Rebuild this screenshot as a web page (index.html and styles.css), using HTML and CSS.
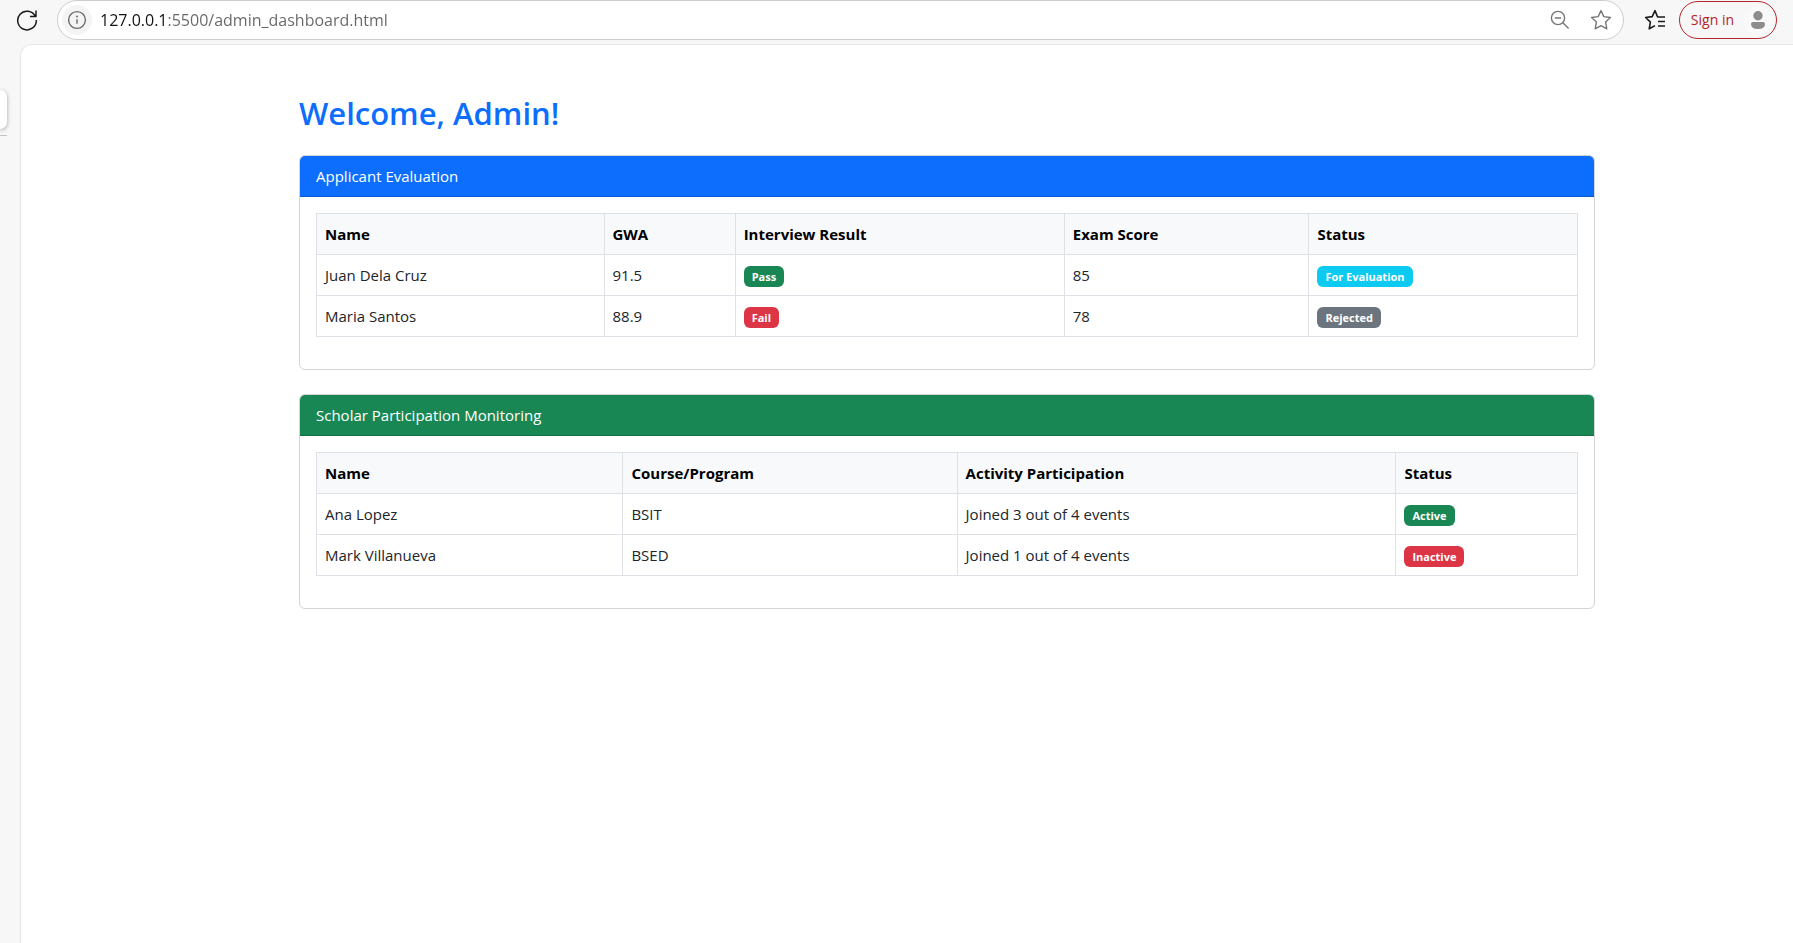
FILE: index.html
```html
<!DOCTYPE html>
<html lang="en">
<head>
<meta charset="utf-8">
<title>Admin Dashboard</title>
<link rel="stylesheet" href="styles.css">
</head>
<body>
<header class="toolbar">
  <button class="icon-button reload" aria-label="Reload">
    <svg width="22" height="22" viewBox="0 0 22 22"><path d="M19.4 7.5A9.3 9.3 0 1 0 20.3 11M20 1.5V7.5H14" /></svg>
  </button>
  <div class="address-bar">
    <button class="icon-button site-info" aria-label="View site information">
      <svg width="20" height="20" viewBox="0 0 20 20"><circle cx="10" cy="10" r="8.4"/><path d="M10 9.2V13.8"/><circle class="dot" cx="10" cy="6.6" r="1"/></svg>
    </button>
    <input class="address" type="text" aria-label="Address" spellcheck="false" value="127.0.0.1:5500/admin_dashboard.html">
    <button class="icon-button muted" aria-label="Zoom out">
      <svg width="20" height="20" viewBox="0 0 20 20"><circle cx="8" cy="8" r="6.6"/><path d="M4.8 8H11.2M12.8 12.8L18.6 18.4"/></svg>
    </button>
    <button class="icon-button muted" aria-label="Add to favorites">
      <svg width="22" height="22" viewBox="0 0 22 22"><path d="M11 1.6L13.8 7.6L20.4 8.5L15.6 13.1L16.8 19.8L11 16.6L5.2 19.8L6.4 13.1L1.6 8.5L8.2 7.6Z"/></svg>
    </button>
  </div>
  <button class="icon-button favorites" aria-label="Favorites">
    <svg width="22" height="22" viewBox="0 0 22 22"><path d="M11 16.6L5.2 19.8L6.4 13.1L1.6 8.5L8.2 7.6L11 1.6L13.6 8H21M14 12.5H21M14 17H21"/></svg>
  </button>
  <button class="sign-in">
    <span>Sign in</span>
    <span class="avatar"><svg width="16" height="20" viewBox="0 0 16 20"><circle cx="8" cy="5.8" r="4.7"/><path d="M3 12H13Q15 12 15 14Q15 19 8 19Q1 19 1 14Q1 12 3 12Z"/></svg></span>
  </button>
</header>
<div class="workspace">
  <aside class="side-strip"><div class="side-tab"></div><hr class="side-line"></aside>
  <main class="page">
    <div class="container">
      <h2 class="welcome">Welcome, Admin!</h2>

      <section class="card">
        <div class="card-header primary">Applicant Evaluation</div>
        <div class="card-body">
          <table class="table applicants">
            <thead><tr><th>Name</th><th>GWA</th><th>Interview Result</th><th>Exam Score</th><th>Status</th></tr></thead>
            <tbody>
              <tr><td>Juan Dela Cruz</td><td>91.5</td><td><span class="badge success">Pass</span></td><td>85</td><td><span class="badge info">For Evaluation</span></td></tr>
              <tr><td>Maria Santos</td><td>88.9</td><td><span class="badge danger">Fail</span></td><td>78</td><td><span class="badge secondary">Rejected</span></td></tr>
            </tbody>
          </table>
        </div>
      </section>

      <section class="card">
        <div class="card-header success">Scholar Participation Monitoring</div>
        <div class="card-body">
          <table class="table scholars">
            <thead><tr><th>Name</th><th>Course/Program</th><th>Activity Participation</th><th>Status</th></tr></thead>
            <tbody>
              <tr><td>Ana Lopez</td><td>BSIT</td><td>Joined 3 out of 4 events</td><td><span class="badge success">Active</span></td></tr>
              <tr><td>Mark Villanueva</td><td>BSED</td><td>Joined 1 out of 4 events</td><td><span class="badge danger">Inactive</span></td></tr>
            </tbody>
          </table>
        </div>
      </section>
    </div>
  </main>
</div>
</body>
</html>
```

FILE: styles.css
```css
*, *::before, *::after { box-sizing: border-box; }

body {
  margin: 0;
  min-height: 100vh;
  display: flex;
  flex-direction: column;
  background: #f7f7f7;
  color: #212529;
  font: 15px/24px "Open Sans", "Noto Sans", sans-serif;
}

button, input { font: inherit; color: inherit; background: none; border: 0; padding: 0; margin: 0; }

svg { display: block; fill: none; stroke: currentColor; stroke-width: 1.4; stroke-linejoin: round; }

/* Toolbar */
.toolbar { display: flex; align-items: center; height: 44px; padding: 0 16px 4px; }
.icon-button { display: flex; align-items: center; justify-content: center; flex: none; }
.reload { color: #1b1b1b; margin-right: 19px; }
.reload svg { stroke-width: 1.5; }
.address-bar {
  flex: 1;
  min-width: 0;
  height: 40px;
  display: flex;
  align-items: center;
  gap: 20px;
  padding: 0 11px 0 4px;
  border: 1px solid #cdcdcd;
  border-radius: 20px;
  background: #fff;
}
.site-info { width: 30px; height: 30px; border-radius: 50%; background: #f4f4f4; color: #6b6b6b; margin-right: -12px; }
.site-info .dot { fill: currentColor; stroke: none; }
.address {
  flex: 1;
  min-width: 0;
  height: 30px;
  font-size: 16px;
  background: linear-gradient(90deg, #111 68px, #666 68px);
  background-clip: text;
  -webkit-text-fill-color: transparent;
}
.muted { color: #777; }
.favorites { color: #1b1b1b; margin: 0 13px 0 20px; }
.favorites svg { stroke-width: 1.6; }
.sign-in {
  display: flex;
  align-items: center;
  gap: 10px;
  height: 38px;
  padding: 0 4px 0 11px;
  border: 1px solid #b3262b;
  border-radius: 19px;
  color: #b3262b;
  font-size: 14px;
}
.avatar { display: flex; align-items: center; justify-content: center; width: 28px; height: 28px; border-radius: 50%; background: #f9f9f9; color: #8c8c8c; }
.avatar svg { fill: currentColor; stroke: none; }

/* Page frame */
.workspace { flex: 1; display: flex; }
.side-strip { width: 20px; padding-top: 46px; flex: none; }
.side-tab { width: 7px; height: 39px; background: #fff; border-radius: 0 8px 8px 0; box-shadow: 0 1px 4px rgba(0, 0, 0, .35); }
.side-line { width: 7px; height: 1px; margin: 6px 0 0; border: 0; background: #c4c4c4; }
.page {
  flex: 1;
  min-width: 0;
  padding: 48px 0 48px 80px;
  background: #fff;
  border: solid #e6e6e6;
  border-width: 1px 0 0 1px;
  border-top-left-radius: 12px;
}
.container { max-width: 1320px; margin: 0 auto; padding: 0 12px; }
.welcome { margin: 0 0 22px; font-size: 31px; line-height: 40px; font-weight: 600; color: #0d6efd; }

/* Cards */
.card { margin-bottom: 24px; border: 1px solid #d3d4d5; border-radius: 6px; overflow: hidden; }
.card-header { padding: 8px 16px; border-bottom: 1px solid rgba(0, 0, 0, .175); color: #fff; }
.card-body { padding: 16px; }

.table { width: 100%; margin-bottom: 16px; table-layout: fixed; border-collapse: collapse; }
.table th, .table td { height: 41px; padding: 8px; border: 1px solid #dee2e6; text-align: left; vertical-align: top; }
.table th { background: #f8f9fa; color: #000; font-weight: 700; }
.applicants th:nth-child(1) { width: 22.8%; }
.applicants th:nth-child(2) { width: 10.4%; }
.applicants th:nth-child(3) { width: 26.1%; }
.applicants th:nth-child(4) { width: 19.4%; }
.scholars th:nth-child(1) { width: 24.3%; }
.scholars th:nth-child(2) { width: 26.5%; }
.scholars th:nth-child(3) { width: 34.8%; }

.badge {
  display: inline-block;
  margin-top: 3px;
  padding: 5px 8px;
  border-radius: 6px;
  color: #fff;
  font-size: 11px;
  line-height: 11px;
  font-weight: 700;
  vertical-align: top;
}
.primary { background: #0d6efd; }
.success { background: #198754; }
.danger { background: #dc3545; }
.info { background: #0dcaf0; }
.secondary { background: #6c757d; }
```
